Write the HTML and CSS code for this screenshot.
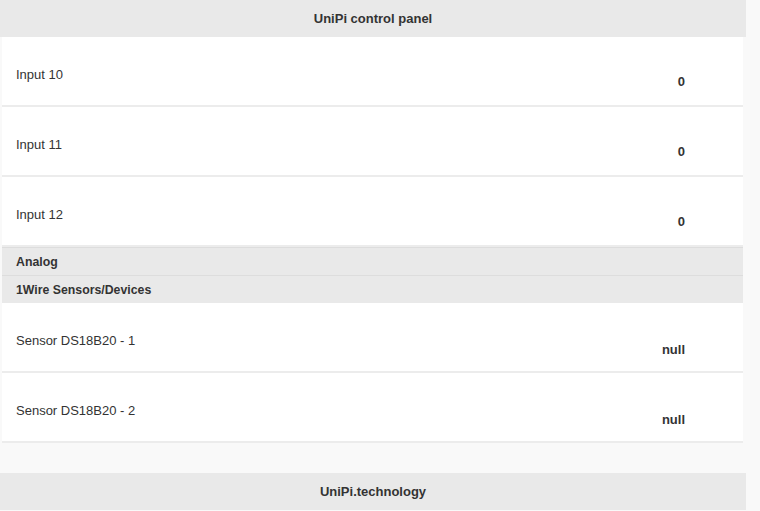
FILE: index.html
```html
<!DOCTYPE html>
<html>
<head>
<meta charset="utf-8">
<title>UniPi control panel</title>
<link rel="stylesheet" href="styles.css">
</head>
<body>
<div class="page">
  <header class="bar"><h1 class="bar-title">UniPi control panel</h1></header>
  <main class="content">
    <ul class="list">
      <li class="row"><span class="label">Input 10</span><span class="value">0</span></li>
      <li class="row"><span class="label">Input 11</span><span class="value">0</span></li>
      <li class="row"><span class="label">Input 12</span><span class="value">0</span></li>
      <li class="divider">Analog</li>
      <li class="divider">1Wire Sensors/Devices</li>
      <li class="row sensor"><span class="label">Sensor DS18B20 - 1</span><span class="value">null</span></li>
      <li class="row sensor"><span class="label">Sensor DS18B20 - 2</span><span class="value">null</span></li>
    </ul>
  </main>
  <footer class="bar"><h2 class="bar-title">UniPi.technology</h2></footer>
</div>
</body>
</html>
```

FILE: styles.css
```css
html, body {
  margin: 0;
  padding: 0;
  background: #f9f9f9;
}
body {
  font-family: "Liberation Sans", Arial, sans-serif;
  color: #333;
}
.page {
  width: 746px;
}
.bar {
  background: #e9e9e9;
  height: 37px;
  display: flex;
  align-items: center;
  justify-content: center;
}
.bar-title {
  margin: 0;
  font-size: 13px;
  font-weight: bold;
  color: #333;
}
.content {
  padding: 0 3px 30px 2px;
}
.list {
  list-style: none;
  margin: 0;
  padding: 0;
}
.row {
  box-sizing: border-box;
  height: 70px;
  background: #fff;
  border-bottom: 2px solid #ececec;
  display: flex;
  align-items: center;
  justify-content: space-between;
  padding: 0 58px 0 14px;
  font-size: 13px;
}
.label {
  margin-top: 6px;
}
.value {
  font-weight: bold;
  margin-top: 20px;
}
.sensor .value {
  margin-top: 24px;
}
.divider {
  box-sizing: border-box;
  height: 28px;
  background: #e9e9e9;
  border-top: 1px solid #dddddd;
  display: flex;
  align-items: center;
  padding-left: 14px;
  font-size: 12.3px;
  font-weight: bold;
}
```
